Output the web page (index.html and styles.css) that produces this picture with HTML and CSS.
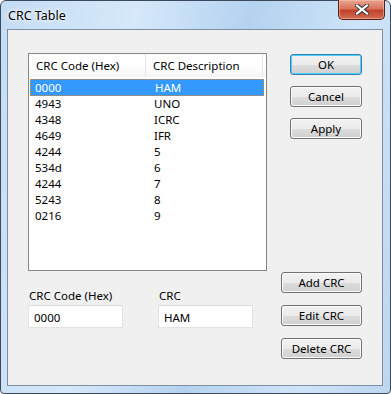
FILE: index.html
```html
<!DOCTYPE html>
<html lang="en">
<head>
  <meta charset="UTF-8"/>
  <title>CRC Table</title>
  <link rel="stylesheet" href="styles.css">
</head>
<body>
  <div class="window">
    <div class="titlebar">
      <span class="title">CRC Table</span>
      <button class="close" aria-label="Close">
        <svg width="14" height="11" viewBox="0 0 14 11">
          <path d="M2 1.5 L12 9.5 M12 1.5 L2 9.5" stroke="#3b3b3b" stroke-width="4.2" stroke-linecap="square"/>
          <path d="M2 1.5 L12 9.5 M12 1.5 L2 9.5" stroke="#fff" stroke-width="2.2" stroke-linecap="square"/>
        </svg>
      </button>
    </div>

    <div class="client">
      <div class="left">
        <!-- liste -->
        <div class="listbox">
          <div class="list-head">
            <div class="col1">CRC Code (Hex)</div>
            <div class="col2">CRC Description</div>
          </div>
          <div class="rows" id="rows"></div>
        </div>

        <div class="fields">
          <div class="field">
            <label>CRC Code (Hex)</label>
            <input type="text" value="0000"/>
          </div>
          <div class="field">
            <label>CRC</label>
            <input type="text" value="HAM"/>
          </div>
        </div>
      </div>

      <div class="right">
        <div class="group">
          <button class="btn btn-default">OK</button>
          <button class="btn">Cancel</button>
          <button class="btn">Apply</button>
        </div>
        <div class="group group-bottom">
          <button class="btn btn-wide">Add CRC</button>
          <button class="btn btn-wide">Edit CRC</button>
          <button class="btn btn-wide">Delete CRC</button>
        </div>
      </div>
    </div>
  </div>

  <script>
    const data = [
      ['0000','HAM'], ['4943','UNO'], ['4348','ICRC'], ['4649','IFR'],
      ['4244','5'], ['534d','6'], ['4244','7'], ['5243','8'], ['0216','9']
    ];
    const rows = document.getElementById('rows');
    data.forEach((d,i)=>{
      const r = document.createElement('div');
      r.className = 'row' + (i===0 ? ' selected' : '');
      r.innerHTML = '<div class="col1">'+d[0]+'</div><div class="col2">'+d[1]+'</div>';
      rows.appendChild(r);
    });
  </script>
</body>
</html>
```

FILE: styles.css
```css
body { margin:0; font-family:"Noto Sans", "Open Sans", sans-serif; font-size:11.5px; color:#000;
       background:#fff }
.window { width:391px; height:394px; box-sizing:border-box;
          border:1px solid #3a4a5c; border-radius:6px 6px 4px 4px;
          background:linear-gradient(100deg, #c4dcf4 0%, #d6e8fa 30%, #b4d2f0 55%, #cfe4f8 80%, #bcd6f0 100%);
          padding:0 7px 7px 6px; display:flex; flex-direction:column }
.titlebar { height:28px; display:flex; align-items:flex-start; justify-content:space-between;
            position:relative }
.title { margin-top:6px; margin-left:1px; font-size:12.5px; color:#000;
         text-shadow:0 0 6px #fff, 0 0 3px #fff }
.close { margin-top:-1px; margin-right:-2px; width:47px; height:20px; padding:0;
         border:1px solid #5a1c14; border-top:none; border-radius:0 0 5px 5px;
         background:linear-gradient(#e8a592 0%, #d9745c 45%, #c2412a 55%, #cf6e52 100%);
         box-shadow:inset 0 0 0 1px rgba(255,200,180,0.5);
         display:flex; align-items:center; justify-content:center }
.client { flex:1; display:flex; justify-content:space-between;
          background:#f0f0f0; border:1px solid #7e8fa2 }

.left { padding:23px 0 0 20px }
.listbox { width:239px; height:218px; box-sizing:border-box; background:#fff;
           border:1px solid #828790 }
.list-head { display:flex; height:23px; align-items:center;
             background:linear-gradient(#fff 0%, #fff 50%, #f4f5f6 100%);
             border-bottom:1px solid #fff; margin-bottom:1px }
.list-head .col1 { width:117px; padding-left:7px; box-sizing:border-box; height:100%;
                   display:flex; align-items:center; border-right:1px solid #e3e5e8 }
.list-head .col2 { padding-left:7px; height:100%; display:flex; align-items:center;
                   flex:1; border-right:1px solid #e3e5e8; margin-right:3px }
.rows { padding:0 2px 0 1px }
.row { display:flex; height:16px; line-height:16px; box-sizing:border-box }
.row .col1 { width:118px; padding-left:5px; box-sizing:border-box }
.row .col2 { padding-left:6px }
.row.selected { height:17px; background:#3399ff; color:#fff; border:1px dotted #e8841c; line-height:16px }
.row.selected .col1 { padding-left:4px }
.row.selected .col2 { padding-left:6px }

.fields { display:flex; gap:35px; margin-top:17px }
.field { display:flex; flex-direction:column }
.field label { line-height:16px; margin-left:1px }
.field input { width:95px; height:23px; box-sizing:border-box; margin-top:1px;
               border:1px solid #e2e3e5; border-top-color:#dadbdd; background:#fff;
               font:inherit; padding:1px 5px 0 }

.right { padding:24px 20px 0 0; display:flex; flex-direction:column; align-items:flex-end }
.group { display:flex; flex-direction:column; gap:11px; align-items:flex-end }
.group-bottom { margin-top:133px; gap:12px }
.btn { width:72px; height:21px; padding:0; font:inherit; color:#000;
       border:1px solid #707070; border-radius:3px;
       background:linear-gradient(#f2f2f2 0%, #ebebeb 50%, #dddddd 51%, #cfcfcf 100%);
       box-shadow:inset 0 0 0 1px #fcfcfc }
.btn-default { border-color:#3c7fb1; box-shadow:inset 0 0 0 1px #48d0f8 }
.btn-wide { width:81px }
```
